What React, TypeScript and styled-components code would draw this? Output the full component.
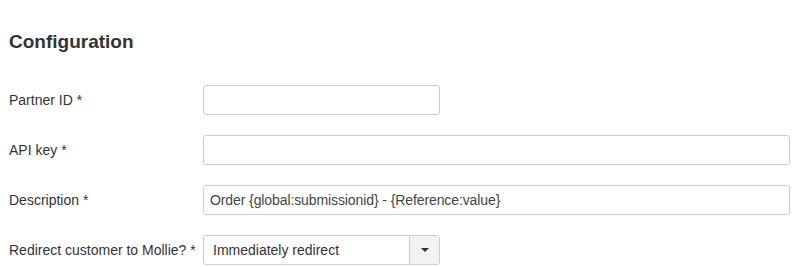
import styled, { createGlobalStyle } from "styled-components";

const GlobalStyle = createGlobalStyle`
    body {
        margin: 0;
        background: #fff;
        font-family: "Liberation Sans", Arial, sans-serif;
        color: #333;
    }
`;

const Page = styled.div`
    padding: 32px 10px 0 9px;
`;

const Title = styled.h3`
    margin: 0 0 33px;
    font-size: 19px;
    line-height: 20px;
    font-weight: 700;
    color: #333;
`;

const Form = styled.div`
    display: flex;
    flex-direction: column;
    gap: 20px;
`;

const Row = styled.div`
    display: grid;
    grid-template-columns: 194px 1fr;
    align-items: center;
`;

const Label = styled.label`
    font-size: 14px;
    color: #333;
`;

const Input = styled.input<{ $width?: number }>`
    box-sizing: border-box;
    height: 30px;
    width: ${(p) => (p.$width ? `${p.$width}px` : "100%")};
    padding: 0 6px;
    border: 1px solid #ccc;
    border-radius: 3px;
    font-family: inherit;
    font-size: 14px;
    letter-spacing: -0.1px;
    color: #444;
    background: #fff;
    outline: none;
`;

const Select = styled.div`
    box-sizing: border-box;
    display: flex;
    width: 237px;
    height: 30px;
    border: 1px solid #ccc;
    border-radius: 3px;
    overflow: hidden;
`;

const SelectValue = styled.div`
    flex: 1;
    display: flex;
    align-items: center;
    padding: 0 9px;
    font-size: 14px;
    color: #333;
`;

const Caret = styled.div`
    width: 29px;
    display: flex;
    align-items: center;
    justify-content: center;
    border-left: 1px solid #ccc;
    background: #f2f2f2;

    &::after {
        content: "";
        border-left: 4px solid transparent;
        border-right: 4px solid transparent;
        border-top: 4px solid #333;
    }
`;

export default function App() {
    return (
        <Page>
            <GlobalStyle />
            <Title>Configuration</Title>
            <Form>
                <Row>
                    <Label>Partner ID *</Label>
                    <Input $width={237} />
                </Row>
                <Row>
                    <Label>API key *</Label>
                    <Input />
                </Row>
                <Row>
                    <Label>Description *</Label>
                    <Input defaultValue="Order {global:submissionid} - {Reference:value}" />
                </Row>
                <Row>
                    <Label>Redirect customer to Mollie? *</Label>
                    <Select>
                        <SelectValue>Immediately redirect</SelectValue>
                        <Caret />
                    </Select>
                </Row>
            </Form>
        </Page>
    );
}
